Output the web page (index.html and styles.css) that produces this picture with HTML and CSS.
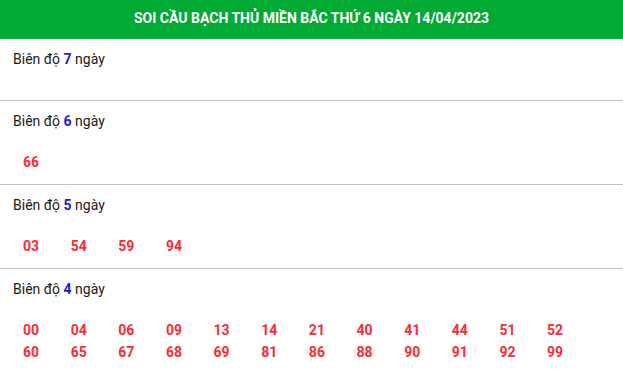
FILE: index.html
```html
<!DOCTYPE html>
<html lang="vi">
<head>
<meta charset="utf-8">
<link rel="stylesheet" href="styles.css">
</head>
<body>
<div class="page">
  <header class="title-bar"><h1 class="title">SOI CẦU BẠCH THỦ MIỀN BẮC THỨ 6 NGÀY 14/04/2023</h1></header>
  <section class="block">
    <div class="label">Biên độ <b>7</b> ngày</div>
    <div class="nums"></div>
  </section>
  <section class="block">
    <div class="label">Biên độ <b>6</b> ngày</div>
    <div class="nums"><span>66</span></div>
  </section>
  <section class="block">
    <div class="label">Biên độ <b>5</b> ngày</div>
    <div class="nums"><span>03</span><span>54</span><span>59</span><span>94</span></div>
  </section>
  <section class="block">
    <div class="label">Biên độ <b>4</b> ngày</div>
    <div class="nums"><span>00</span><span>04</span><span>06</span><span>09</span><span>13</span><span>14</span><span>21</span><span>40</span><span>41</span><span>44</span><span>51</span><span>52</span><span>60</span><span>65</span><span>67</span><span>68</span><span>69</span><span>81</span><span>86</span><span>88</span><span>90</span><span>91</span><span>92</span><span>99</span></div>
  </section>
</div>
</body>
</html>
```
FILE: styles.css
```css
html, body { margin: 0; padding: 0; background: #fff; }
body { font-family: Roboto, "Liberation Sans", sans-serif; color: #1a1a1a; font-size: 14px; }
.page { width: 623px; overflow: hidden; }
.title-bar {
  background: #00aa33;
  height: 39px;
  box-sizing: border-box;
  padding-bottom: 3px;
  display: flex;
  align-items: center;
  justify-content: center;
}
.title {
  margin: 0;
  color: #fff;
  font-size: 14px;
  font-weight: 700;
  white-space: nowrap;
  line-height: 20px;
}
.block {
  padding: 10px 13px 11px;
  border-bottom: 1px solid #c4c4c4;
}
.label { line-height: 20px; height: 20px; }
.label b { color: #1c1cd6; font-weight: 700; }
.nums {
  margin-top: 20px;
  padding-left: 10px;
  display: grid;
  grid-template-columns: repeat(12, 47.65px);
  grid-auto-rows: 22px;
}
.nums span {
  color: #fb2a36;
  font-weight: 700;
  font-size: 14px;
  line-height: 22px;
}
```
